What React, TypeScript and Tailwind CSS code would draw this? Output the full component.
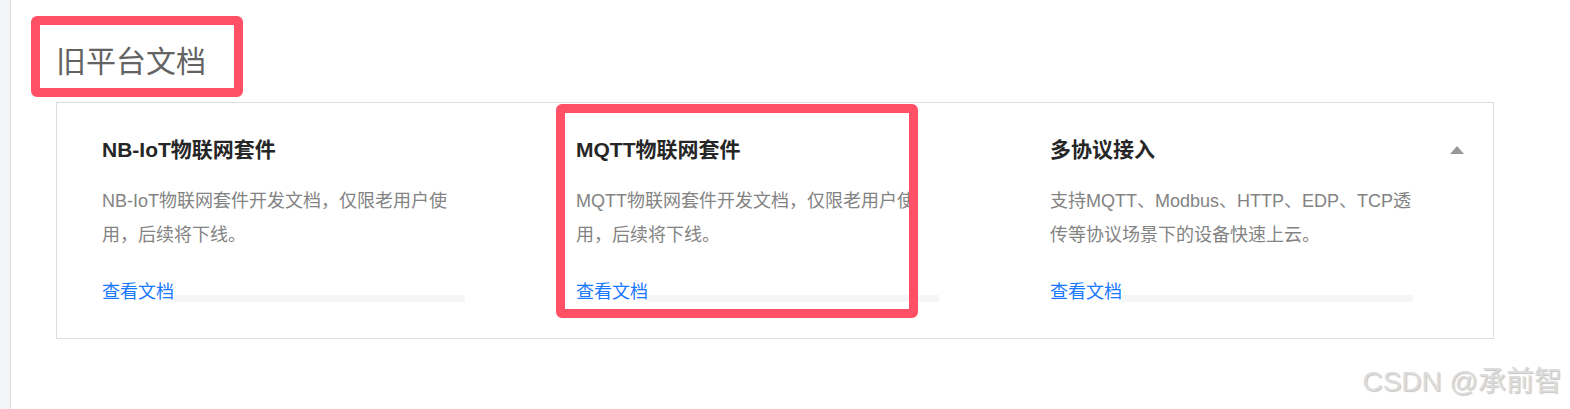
// 旧平台文档：三栏文档卡片 + 标注红框
const FONT = "font-['Liberation_Sans','Noto_Sans_CJK_SC',sans-serif]"

const docs = [
  {
    title: 'NB-IoT物联网套件',
    desc: 'NB-IoT物联网套件开发文档，仅限老用户使用，后续将下线。',
  },
  {
    title: 'MQTT物联网套件',
    desc: 'MQTT物联网套件开发文档，仅限老用户使用，后续将下线。',
  },
  {
    title: '多协议接入',
    desc: '支持MQTT、Modbus、HTTP、EDP、TCP透传等协议场景下的设备快速上云。',
  },
]

// ── 单个文档栏 ─────────────────────────────
function DocColumn({ title, desc, last }: { title: string; desc: string; last?: boolean }) {
  return (
    <div className={last ? 'flex-1 pr-[29px]' : 'w-[474px] shrink-0'}>
      <div className="flex items-center justify-between">
        <h3 className="text-[21px] leading-[28px] font-bold text-[#262626]">{title}</h3>
        {last && (
          <svg width="14" height="8" viewBox="0 0 14 8" className="mt-[-1px]">
            <polygon points="7,0 14,8 0,8" fill="#999999" />
          </svg>
        )}
      </div>
      <p className="w-[363px] mt-[20px] text-[18px] leading-[34px] text-[#838383]">{desc}</p>
      <div className="w-[363px] mt-[28px] flex items-end">
        <a href="#" className="text-[18px] leading-[24px] text-[#1677ff]">查看文档</a>
        <div className="flex-1 h-[7px] mb-[2px] bg-[#f5f6f8]" />
      </div>
    </div>
  )
}

export default function App() {
  return (
    <div className={`relative h-[409px] w-[1570px] bg-white flex overflow-hidden ${FONT}`}>
      {/* 左侧灰色边栏 */}
      <div className="w-[11px] shrink-0 bg-[#f4f5f7] border-r border-[#dddddd]" />

      <div className="flex-1 pl-[45px] pt-[47px]">
        <h2 className="text-[30px] leading-[30px] text-[#636363]">旧平台文档</h2>

        {/* 文档卡片 */}
        <div className="mt-[25px] w-[1438px] border border-[#dddddd] pl-[45px] pt-[33px] pb-[34px] flex">
          {docs.map((d, i) => (
            <DocColumn key={d.title} title={d.title} desc={d.desc} last={i === docs.length - 1} />
          ))}
        </div>
      </div>

      {/* 标注红框 */}
      <div className="absolute left-[31px] top-[16px] w-[212px] h-[81px] border-[9px] border-[#ff5066] rounded-[6px]" />
      <div className="absolute left-[556px] top-[104px] w-[362px] h-[214px] border-[9px] border-[#ff5066] rounded-[6px]" />

      {/* 水印 */}
      <div className="absolute right-[8px] top-[366px] text-[28px] leading-[32px] text-[#dcdcdc] [text-shadow:1px_1px_1px_#c4c4c4]">
        CSDN @承前智
      </div>
    </div>
  )
}
